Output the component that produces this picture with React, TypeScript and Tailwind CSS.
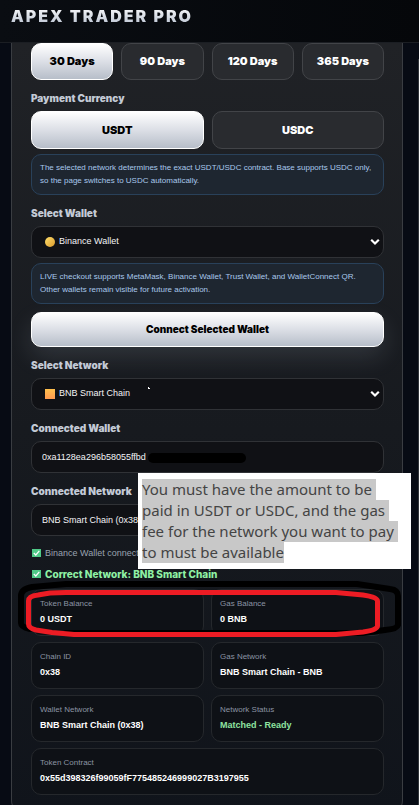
import { useState } from 'react'

const PLANS = ['30 Days', '90 Days', '120 Days', '365 Days']
const CURRENCIES = ['USDT', 'USDC']

const DETAILS = [
  { label: 'Token Balance', value: '0 USDT' },
  { label: 'Gas Balance', value: '0 BNB' },
  { label: 'Chain ID', value: '0x38' },
  { label: 'Gas Network', value: 'BNB Smart Chain - BNB' },
  { label: 'Wallet Network', value: 'BNB Smart Chain (0x38)' },
  { label: 'Network Status', value: 'Matched - Ready', ok: true },
  { label: 'Token Contract', value: '0x55d398326f99059fF775485246999027B3197955', wide: true },
]

const NOTE_LINES = [
  'You must have the amount to be ',
  'paid in USDT or USDC, and the gas ',
  'fee for the network you want to pay ',
  'to must be available',
]

const LIT = 'border-white bg-linear-to-b from-white via-[#dcdfe6] to-[#b7bec9] text-black'
const DIM = 'border-[#424448] bg-[#292b2f] text-white'
const FIELD = 'h-8 w-full rounded-[10px] border border-[#303236] bg-[#101115] text-[9px] text-gray-100 outline-none'
const LABEL = "block font-['Inter'] text-[10px] leading-4 font-black text-[#c3cad6]"

function OptionButton({ label, active, tall, onClick }: {
  label: string
  active: boolean
  tall?: boolean
  onClick: () => void
}) {
  return (
    <button
      type="button"
      aria-pressed={active}
      onClick={onClick}
      className={`rounded-[10px] border font-['Inter'] text-[11px] font-black ${tall ? 'h-[38px]' : 'h-[37px]'} ${active ? LIT : DIM}`}
    >
      {label}
    </button>
  )
}

function Hint({ children }: { children: React.ReactNode }) {
  return (
    <p className="rounded-[10px] border border-[#29415a] bg-[#1e2630] px-2 pt-[6px] pb-[7px] text-[8px] leading-[13px] text-[#a9c8ec]">
      {children}
    </p>
  )
}

function SelectField({ id, value, icon }: { id: string; value: string; icon: React.ReactNode }) {
  return (
    <div className="relative">
      <select id={id} className={`${FIELD} appearance-none pr-6 pl-[27px]`}>
        <option>{value}</option>
      </select>
      <span className="pointer-events-none absolute top-[11px] left-[14px]">{icon}</span>
      <svg className="pointer-events-none absolute top-3 right-1" width="10" height="8" viewBox="0 0 10 8" fill="none">
        <path d="M1.2 1.8 5 5.5 8.8 1.8" stroke="#fff" strokeWidth="2.2" />
      </svg>
    </div>
  )
}

function CheckMark() {
  return (
    <svg width="9" height="8" viewBox="0 0 9 8" className="shrink-0">
      <rect width="9" height="8" fill="#4fc987" />
      <path d="M1.8 4 3.8 6 7.3 1.8" stroke="#fff" strokeWidth="1.2" fill="none" />
    </svg>
  )
}

function Note() {
  return (
    <div className="absolute top-[-31px] right-[-27px] left-[107px] bg-white py-[6px] pl-1 font-['Noto_Sans'] text-[15px] leading-[21px] text-[#444]">
      {NOTE_LINES.map(line => (
        <div key={line} className="whitespace-pre">
          <span className="inline-block bg-[#c8c8c8]">{line}</span>
        </div>
      ))}
    </div>
  )
}

// Hand-drawn rings around the two balances.
function Rings() {
  return (
    <svg className="pointer-events-none absolute top-[-10px] left-[-13px]" width="386" height="62" viewBox="0 0 386 62" fill="none" strokeLinecap="round" strokeLinejoin="round">
      <path
        d="M12 50 Q3 48 3 44 V17 Q3 10 14 8 L48 5 H339 L372 10 Q380 11 380 17 V46 Q379 50 367 51 L345 54 H48"
        stroke="#000"
        strokeWidth="6"
      />
      <path
        d="M10.5 22 Q10.5 17 20 16 L32 14 L48 13.5 H318 L345 16 Q359.5 18 359.5 22 V47 Q359.5 51 345 53 L318 55.5 H56 L34 53.5 L18 51 Q10.5 49 10.5 45 Z"
        stroke="#ed1c24"
        strokeWidth="5"
      />
    </svg>
  )
}

export default function App() {
  const [plan, setPlan] = useState('30 Days')
  const [currency, setCurrency] = useState('USDT')

  return (
    <div className="flex h-screen flex-col overflow-hidden bg-[#070b14] font-['Liberation_Sans',sans-serif]">
      <header className="shrink-0 border-b border-[#1b1e23] bg-linear-to-r from-[#0a0d12] to-[#05070a] px-[11px] pt-[6px] pb-4">
        <h1 className="bg-linear-to-b from-white to-[#b7c0cf] bg-clip-text font-['Inter'] text-[16px] leading-5 font-black tracking-[2px] text-transparent">
          APEX TRADER PRO
        </h1>
      </header>

      <main className="flex min-h-0 flex-1 gap-[15px] overflow-y-auto pl-[11px] [scrollbar-width:none]">
        <section className="h-max flex-1 rounded-b-2xl border-x border-b border-[#3a3d42] bg-linear-to-b from-[#202226] via-[#171a1f] to-[#10141b] pr-[18px] pb-5 pl-[19px]">
          <div className="grid grid-cols-4 gap-2">
            {PLANS.map(p => (
              <OptionButton key={p} label={p} active={p === plan} onClick={() => setPlan(p)} />
            ))}
          </div>

          <h2 className={`${LABEL} mt-[10px] mb-[5px]`}>Payment Currency</h2>
          <div className="mb-[5px] grid grid-cols-2 gap-2">
            {CURRENCIES.map(c => (
              <OptionButton key={c} label={c} tall active={c === currency} onClick={() => setCurrency(c)} />
            ))}
          </div>
          <Hint>
            The selected network determines the exact USDT/USDC contract. Base supports USDC only,
            <br />
            so the page switches to USDC automatically.
          </Hint>

          <label htmlFor="wallet" className={`${LABEL} mt-[10px] mb-[5px]`}>Select Wallet</label>
          <SelectField
            id="wallet"
            value="Binance Wallet"
            icon={<span className="block size-[10px] rounded-full bg-linear-to-br from-[#ffdf6b] to-[#d99a2b]" />}
          />
          <div className="mt-[5px]">
            <Hint>
              LIVE checkout supports MetaMask, Binance Wallet, Trust Wallet, and WalletConnect QR.
              <br />
              Other wallets remain visible for future activation.
            </Hint>
          </div>

          <button type="button" className={`mt-2 h-[35px] w-full rounded-[10px] border font-['Inter'] text-[10px] font-black shadow-[0_10px_24px_rgba(200,210,230,0.14)] ${LIT}`}>
            Connect Selected Wallet
          </button>

          <label htmlFor="network" className={`${LABEL} mt-[10px] mb-[5px]`}>Select Network</label>
          <div className="relative">
            <SelectField
              id="network"
              value="BNB Smart Chain"
              icon={<span className="block size-[10px] bg-linear-to-b from-[#ffc04d] to-[#ff9950]" />}
            />
            <svg className="pointer-events-none absolute top-2 left-[117px]" width="3" height="4" viewBox="0 0 3 4">
              <path d="M0 1h1v1h1v1H0z" fill="#fff" />
            </svg>
          </div>

          <label htmlFor="address" className={`${LABEL} mt-[10px] mb-[5px]`}>Connected Wallet</label>
          <div className="relative">
            <input id="address" readOnly value="0xa1128ea296b58055ffbd" className={`${FIELD} px-[10px]`} />
            <span className="absolute top-3 left-[117px] h-[10px] w-[98px] rounded-full bg-black" />
          </div>

          <label htmlFor="chain" className={`${LABEL} mt-[10px] mb-[5px]`}>Connected Network</label>
          <div className="relative">
            <input id="chain" readOnly value="BNB Smart Chain (0x38)" className={`${FIELD} px-[10px]`} />
            <Note />
          </div>

          <p className="mt-[9px] flex items-center gap-1 pl-px text-[9px] leading-4 text-[#9aa3b0]">
            <CheckMark />
            Binance Wallet connected
          </p>
          <p className="mt-[5px] flex items-center gap-1 pl-px font-['Inter'] text-[10px] leading-4 font-extrabold text-[#8ff0a4]">
            <CheckMark />
            Correct Network: BNB Smart Chain
          </p>

          <div className="relative mt-[7px]">
            <dl className="grid grid-cols-2 gap-x-[7px] gap-y-[6px]">
              {DETAILS.map(d => (
                <div key={d.label} className={`h-[47px] rounded-[10px] border border-[#25282c] bg-[#0e1116] px-2 pt-[7px] ${d.wide ? 'col-span-2' : ''}`}>
                  <dt className="text-[8px] leading-[13px] text-[#8b94a3]">{d.label}</dt>
                  <dd className={`mt-[2px] text-[9px] leading-[14px] font-bold ${d.ok ? 'text-[#8fe3a0]' : 'text-white'}`}>{d.value}</dd>
                </div>
              ))}
            </dl>
            <Rings />
          </div>
        </section>

        {/* edge of the neighbouring panel */}
        <div className="mt-4 w-px shrink-0 bg-[#30343a]" />
      </main>
    </div>
  )
}
